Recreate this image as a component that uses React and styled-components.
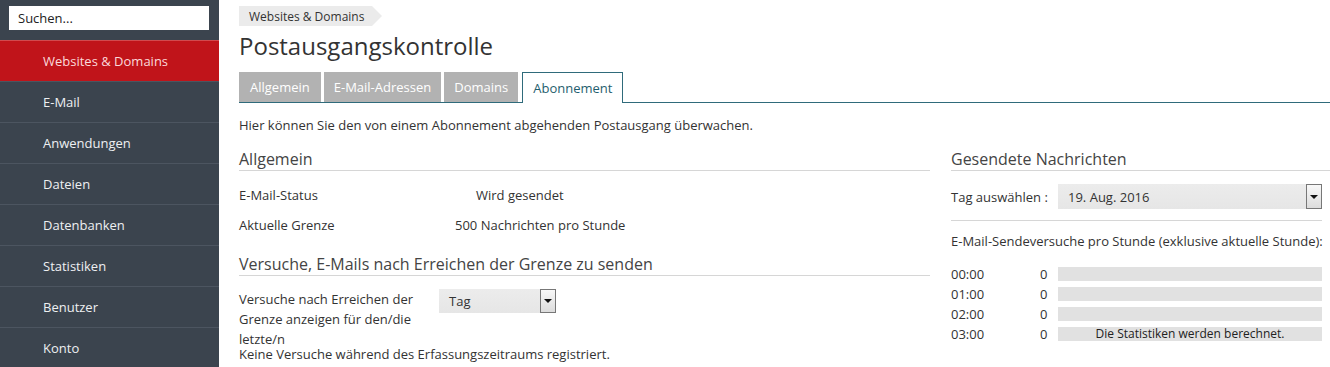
import React from 'react';
import styled, { createGlobalStyle } from 'styled-components';

const Global = createGlobalStyle`
  html, body { margin: 0; padding: 0; background: #fff; }
  body { font-family: "Open Sans", "Liberation Sans", sans-serif; font-size: 13px; color: #333; }
`;

const Layout = styled.div`
  display: flex;
  height: 367px;
  overflow: hidden;
`;

const Sidebar = styled.nav`
  width: 219px;
  flex: none;
  background: #3b444e;
  padding-top: 6px;
`;

const Search = styled.div`
  margin: 0 10px 10px 9px;
  height: 24px;
  background: #fff;
  padding-left: 9px;
  display: flex;
  align-items: center;
  font-size: 13px;
  color: #222;
`;

const NavItem = styled.div`
  height: 40px;
  display: flex;
  align-items: center;
  padding-left: 43px;
  color: ${p => (p.active ? '#fbd9da' : '#eef0f2')};
  background: ${p => (p.active ? '#c0141a' : 'transparent')};
  border-top: 1px solid ${p => (p.active ? '#d24a4e' : '#4c5560')};
  font-size: 13px;
`;

const Main = styled.main`
  flex: 1;
  padding: 6px 0 0 20px;
  min-width: 0;
`;

const Crumb = styled.div`
  position: relative;
  display: inline-flex;
  align-items: center;
  height: 20px;
  padding: 0 8px 0 10px;
  background: #ebebeb;
  font-size: 12px;
  color: #333;
  &::after {
    content: '';
    position: absolute;
    right: -10px;
    top: 0;
    border-left: 10px solid #ebebeb;
    border-top: 10px solid transparent;
    border-bottom: 10px solid transparent;
  }
`;

const Title = styled.h1`
  margin: 5px 0 11px;
  font-size: 24px;
  font-weight: 400;
  line-height: 30px;
  color: #333;
`;

const Tabs = styled.div`
  display: flex;
  gap: 3px;
  border-bottom: 1px solid #2f6b7b;
  height: 30px;
`;

const Tab = styled.div`
  box-sizing: border-box;
  padding: 0 ${p => p.px}px;
  display: flex;
  align-items: center;
  font-size: 13px;
  color: ${p => (p.active ? '#1f5e6e' : '#fff')};
  background: ${p => (p.active ? '#fff' : '#b2b2b2')};
  border: ${p => (p.active ? '1px solid #2f6b7b' : 'none')};
  border-bottom: none;
  height: ${p => (p.active ? '31px' : '30px')};
  margin-left: ${p => (p.active ? '1px' : '0')};
`;

const Intro = styled.p`
  margin: 13px 0 0;
  line-height: 18px;
`;

const Columns = styled.div`
  display: flex;
  gap: 21px;
  margin-top: 14px;
`;

const Left = styled.section`
  width: 691px;
  flex: none;
`;

const Right = styled.section`
  flex: 1;
`;

const Heading = styled.h2`
  margin: ${p => p.mt || 0}px 0 0;
  font-size: 16px;
  font-weight: 400;
  color: #444;
  line-height: 22px;
  border-bottom: 1px solid #d6d6d6;
`;

const InfoRow = styled.div`
  display: flex;
  line-height: 18px;
  margin-top: ${p => p.mt}px;
`;

const InfoLabel = styled.div`
  width: ${p => p.w}px;
  flex: none;
`;

const SelectBox = styled.div`
  width: ${p => p.w}px;
  height: ${p => p.h}px;
  box-sizing: border-box;
  background: linear-gradient(#ececec, #e6e6e6);
  display: flex;
  align-items: center;
  padding-left: 10px;
  flex: ${p => (p.grow ? 1 : 'none')};
`;

const SelectText = styled.span`
  flex: 1;
`;

const Arrow = styled.span`
  width: 16px;
  height: 100%;
  box-sizing: border-box;
  border: 1px solid #777;
  background: linear-gradient(#f8f8f8, #dcdcdc);
  display: flex;
  align-items: center;
  justify-content: center;
  &::before {
    content: '';
    border-top: 4px solid #111;
    border-left: 4px solid transparent;
    border-right: 4px solid transparent;
  }
`;

const AttemptRow = styled.div`
  display: flex;
  margin-top: 13px;
  align-items: flex-start;
`;

const AttemptLabel = styled.div`
  width: 200px;
  line-height: 20px;
  flex: none;
`;

const Note = styled.div`
  line-height: 20px;
  margin-top: -5px;
`;

const DayRow = styled.div`
  display: flex;
  align-items: center;
  margin-top: 13px;
  padding-bottom: 11px;
  border-bottom: 1px solid #d6d6d6;
  margin-right: 8px;
`;

const DayLabel = styled.div`
  width: 107px;
  flex: none;
`;

const ChartTitle = styled.div`
  margin-top: 11px;
  line-height: 18px;
`;

const Chart = styled.div`
  margin-top: 17px;
  display: flex;
  flex-direction: column;
  gap: 6px;
  margin-right: 8px;
`;

const HourRow = styled.div`
  display: flex;
  align-items: center;
  height: 14px;
`;

const Hour = styled.div`
  width: 89px;
  flex: none;
`;

const Count = styled.div`
  width: 18px;
  flex: none;
`;

const Bar = styled.div`
  flex: 1;
  height: 14px;
  background: #e1e1e1;
  font-size: 12px;
  line-height: 14px;
  text-align: center;
  color: #222;
`;

const nav = ['Websites & Domains', 'E-Mail', 'Anwendungen', 'Dateien', 'Datenbanken', 'Statistiken', 'Benutzer', 'Konto'];
const tabs = [
  { label: 'Allgemein', px: 11 },
  { label: 'E-Mail-Adressen', px: 10 },
  { label: 'Domains', px: 10 },
  { label: 'Abonnement', px: 10, active: true },
];
const hours = [
  { h: '00:00', n: '0' },
  { h: '01:00', n: '0' },
  { h: '02:00', n: '0' },
  { h: '03:00', n: '0', note: 'Die Statistiken werden berechnet.' },
];

export default function App() {
  return (
    <>
      <Global />
      <Layout>
        <Sidebar>
          <Search>Suchen...</Search>
          {nav.map((n, i) => (
            <NavItem key={n} active={i === 0}>{n}</NavItem>
          ))}
        </Sidebar>
        <Main>
          <Crumb>Websites &amp; Domains</Crumb>
          <Title>Postausgangskontrolle</Title>
          <Tabs>
            {tabs.map(t => (
              <Tab key={t.label} px={t.px} active={t.active}>{t.label}</Tab>
            ))}
          </Tabs>
          <Intro>Hier können Sie den von einem Abonnement abgehenden Postausgang überwachen.</Intro>
          <Columns>
            <Left>
              <Heading>Allgemein</Heading>
              <InfoRow mt={15}>
                <InfoLabel w={237}>E-Mail-Status</InfoLabel>
                <div>Wird gesendet</div>
              </InfoRow>
              <InfoRow mt={12}>
                <InfoLabel w={216}>Aktuelle Grenze</InfoLabel>
                <div>500 Nachrichten pro Stunde</div>
              </InfoRow>
              <Heading mt={19}>Versuche, E-Mails nach Erreichen der Grenze zu senden</Heading>
              <AttemptRow>
                <AttemptLabel>Versuche nach Erreichen der Grenze anzeigen für den/die letzte/n</AttemptLabel>
                <SelectBox w={117} h={24}>
                  <SelectText>Tag</SelectText>
                  <Arrow />
                </SelectBox>
              </AttemptRow>
              <Note>Keine Versuche während des Erfassungszeitraums registriert.</Note>
            </Left>
            <Right>
              <Heading>Gesendete Nachrichten</Heading>
              <DayRow>
                <DayLabel>Tag auswählen :</DayLabel>
                <SelectBox grow h={25}>
                  <SelectText>19. Aug. 2016</SelectText>
                  <Arrow />
                </SelectBox>
              </DayRow>
              <ChartTitle>E-Mail-Sendeversuche pro Stunde (exklusive aktuelle Stunde):</ChartTitle>
              <Chart>
                {hours.map(r => (
                  <HourRow key={r.h}>
                    <Hour>{r.h}</Hour>
                    <Count>{r.n}</Count>
                    <Bar>{r.note}</Bar>
                  </HourRow>
                ))}
              </Chart>
            </Right>
          </Columns>
        </Main>
      </Layout>
    </>
  );
}
